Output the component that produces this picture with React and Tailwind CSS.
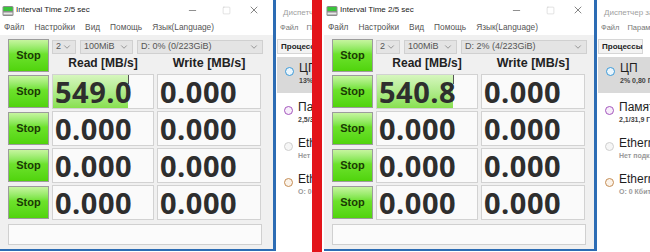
import { ChevronDown, Minus, Square, X } from 'lucide-react';

const sans = "font-['Liberation_Sans',Arial,sans-serif]";

const AppIcon = () => (
    <svg width="12" height="12" viewBox="0 0 12 12">
        <rect x="0.5" y="1" width="11" height="10" rx="1.5" fill="#8c8c8c" />
        <rect x="1.5" y="2" width="9" height="4" fill="#39c43a" />
        <rect x="1.5" y="7.5" width="9" height="2" fill="#e8e8e8" />
    </svg>
);

const StopButton = () => (
    <div className="flex h-[33px] w-[41px] shrink-0 items-center justify-center border border-[#9c9c9c] bg-linear-to-b from-[#c6f59f] via-[#6de22b] via-45% to-[#50d40a] font-['Liberation_Sans',Arial,sans-serif] text-[11px] font-bold text-[#1a3a04]">
        Stop
    </div>
);

const Dropdown = ({ label, width }) => (
    <div className={`flex h-[14px] items-center justify-between border border-[#d0d0d0] bg-[#e4e4e4] px-[3px] text-[9px] whitespace-nowrap text-[#555] ${width}`}>
        <span>{label}</span>
        <ChevronDown size={10} strokeWidth={1.5} className="shrink-0 text-[#666]" />
    </div>
);

const Meter = ({ value, bar, width }) => (
    <div className={`relative flex h-[35px] items-center border border-[#d2d2d2] bg-[#fafafa] pl-[2px] ${width}`}>
        {bar > 0 && (
            <>
                <div className="absolute inset-y-0 left-0 bg-linear-to-b from-[#d6f6be] to-[#88e04f]" style={{ width: bar }} />
                <div className="absolute top-0 h-[9px] w-px bg-[#555]" style={{ left: bar }} />
            </>
        )}
        <span className="relative font-['Open_Sans',sans-serif] text-[29px] leading-[33px] font-bold tracking-[0.5px] text-[#2e2e2e]">
            {value}
        </span>
    </div>
);

const DiskWindow = ({ width, drive, rows }) => (
    <div className={`flex h-[251px] shrink-0 flex-col border-r-[3px] border-b-[2px] border-[#2c6cb4] bg-white ${sans} ${width}`}>
        {/* title bar */}
        <div className="flex h-[20px] items-center">
            <div className="ml-[2px] mt-[1px]">
                <AppIcon />
            </div>
            <span className="ml-[2px] w-[164px] text-[8px] whitespace-nowrap text-[#1a1a1a]">Interval Time 2/5 sec</span>
            <div className="flex w-[24px] justify-center text-[#333]">
                <Minus size={11} strokeWidth={1.2} />
            </div>
            <div className="ml-[10px] flex w-[24px] justify-center text-[#c4c4c4]">
                <Square size={9} strokeWidth={1.3} />
            </div>
            <div className="ml-[4px] flex w-[24px] justify-center text-[#333]">
                <X size={12} strokeWidth={1.2} />
            </div>
        </div>

        {/* menu */}
        <div className="flex h-[15px] items-center gap-[10px] pl-[4px] text-[8.3px] whitespace-nowrap text-[#555]">
            <span className="shrink-0">Файл</span>
            <span className="shrink-0">Настройки</span>
            <span className="shrink-0">Вид</span>
            <span className="shrink-0">Помощь</span>
            <span className="shrink-0">Язык(Language)</span>
        </div>

        {/* body */}
        <div className="flex flex-1 flex-col bg-[#f0f0f0] pt-[4px] pl-[8px]">
            <div className="flex">
                <StopButton />
                <div className="ml-[3px] flex flex-col">
                    <div className="mt-[1px] flex gap-[4px]">
                        <Dropdown label="2" width="w-[24px]" />
                        <Dropdown label="100MiB" width="w-[53px]" />
                        <Dropdown label={drive} width="w-[126px]" />
                    </div>
                    <div className="flex h-[18px] items-center gap-[3px] text-[12px] font-bold whitespace-nowrap text-[#222]">
                        <div className="w-[102px] text-center">Read [MB/s]</div>
                        <div className="w-[104px] text-center text-[12.5px]">Write [MB/s]</div>
                    </div>
                </div>
            </div>

            {rows.map((row, i) => (
                <div key={i} className="mt-[2px] flex items-center gap-[3px]">
                    <StopButton />
                    <Meter value={row.read} bar={row.bar} width="w-[102px]" />
                    <Meter value={row.write} bar={0} width="w-[104px]" />
                </div>
            ))}

            <div className="mt-[4px] h-[21px] w-[254px] border border-[#d0d0d0] bg-[#fbfbfb]" />
        </div>
    </div>
);

const TmIcon = () => (
    <svg width="10" height="9" viewBox="0 0 10 9">
        <rect x="0.5" y="0.5" width="9" height="6.5" fill="#cfe3f3" stroke="#7aa7cf" />
        <path d="M2 5 L4 3 L5.5 4.5 L8 2" fill="none" stroke="#3b8a3b" strokeWidth="1" />
        <rect x="3" y="7.5" width="4" height="1" fill="#7aa7cf" />
    </svg>
);

const TaskPane = ({ items }) => (
    <div className={`flex min-w-0 flex-1 flex-col overflow-hidden bg-white ${sans}`}>
        <div className="flex h-[20px] items-center gap-[3px] pt-[5px] pl-[4px] whitespace-nowrap">
            <TmIcon />
            <span className="text-[8px] text-[#a0a0a0]">Диспетчер задач</span>
        </div>
        <div className="flex h-[15px] items-center gap-[8px] pl-[4px] text-[7.5px] whitespace-nowrap text-[#777]">
            <span>Файл</span>
            <span>Параметры</span>
            <span>Вид</span>
        </div>
        <div className="mt-[4px] ml-[1px] flex h-[15px] w-[45px] shrink-0 items-center border border-[#d6d6d6] bg-[#f3f3f3] pl-[3px] text-[8px] font-bold whitespace-nowrap text-[#222]">
            Процессы
        </div>
        <div className="mt-[3px] flex flex-col">
            {items.map((it, i) => (
                <div
                    key={i}
                    className={`flex h-[36px] shrink-0 items-start gap-[5px] pt-[4px] pl-[8px] whitespace-nowrap ${it.sel ? 'ml-[1px] h-[33px] bg-[#d9d9d9]' : ''} ${i === 1 ? 'mt-[3px]' : ''}`}
                >
                    <span className={`mt-[6px] h-[9px] w-[9px] shrink-0 rounded-full border-[1.5px] ${it.ring}`} />
                    <div className="flex flex-col">
                        <span className="text-[12px] leading-[15px] text-[#1e1e1e]">{it.title}</span>
                        <span className={`text-[7px] leading-[10px] font-bold ${it.muted ? 'text-[#9a9a9a]' : 'text-[#444]'}`}>{it.sub}</span>
                    </div>
                </div>
            ))}
        </div>
    </div>
);

const leftItems = [
    { title: 'ЦП', sub: '13%  0,80 ГГц', ring: 'border-[#3c9ad8] bg-[#eaf5fc]', sel: true },
    { title: 'Память', sub: '2,5/31,9 ГБ (8%)', ring: 'border-[#a456bd] bg-[#f7eefa]' },
    { title: 'Ethernet', sub: 'Нет подключения', ring: 'border-[#cfcfcf] bg-[#f6f6f6]', muted: true },
    { title: 'Ethernet', sub: 'О: 0 Кбит/с', ring: 'border-[#c48d55] bg-[#fbf3ea]', muted: true },
];

const rightItems = [
    { title: 'ЦП', sub: '2%  0,80 ГГц', ring: 'border-[#3c9ad8] bg-[#eaf5fc]', sel: true },
    { title: 'Память', sub: '2,1/31,9 ГБ (7%)', ring: 'border-[#a456bd] bg-[#f7eefa]' },
    { title: 'Ethernet', sub: 'Нет подключения', ring: 'border-[#cfcfcf] bg-[#f6f6f6]', muted: true },
    { title: 'Ethernet', sub: 'О: 0 Кбит/с', ring: 'border-[#c48d55] bg-[#fbf3ea]', muted: true },
];

const zeros = { read: '0.000', write: '0.000', bar: 0 };

export default function App() {
    return (
        <div className="flex h-[252px] w-[650px] overflow-hidden bg-white">
            <div className="flex w-[312px] shrink-0">
                <DiskWindow width="w-[276px]" drive="D: 0% (0/223GiB)" rows={[{ read: '549.0', write: '0.000', bar: 75 }, zeros, zeros, zeros]} />
                <TaskPane items={leftItems} />
            </div>
            <div className="w-[10px] shrink-0 bg-[#e3141a]" />
            <div className="flex min-w-0 flex-1 pl-[2px]">
                <DiskWindow width="w-[273px]" drive="D: 2% (4/223GiB)" rows={[{ read: '540.8', write: '0.000', bar: 76 }, zeros, zeros, zeros]} />
                <TaskPane items={rightItems} />
            </div>
        </div>
    );
}
